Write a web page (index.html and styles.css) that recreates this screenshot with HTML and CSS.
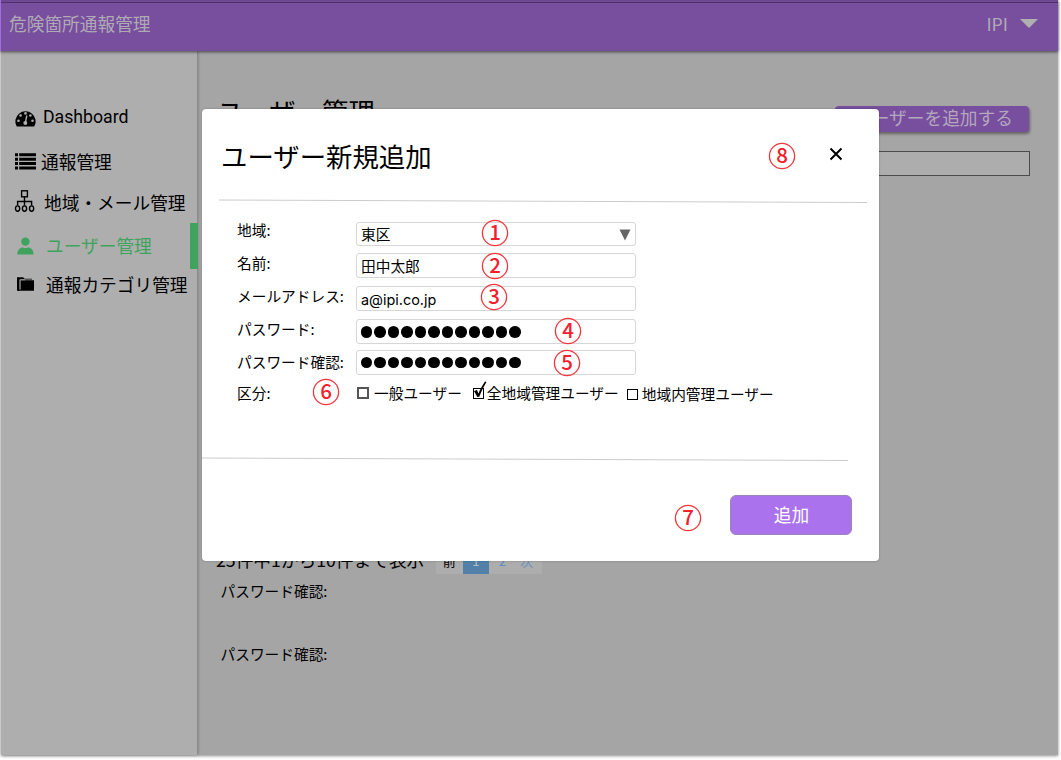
FILE: index.html
```html
<!DOCTYPE html>
<html lang="ja">
<head>
<meta charset="utf-8">
<title>危険箇所通報管理</title>
<link rel="stylesheet" href="styles.css">
</head>
<body>
<div class="app">
  <header class="topbar">
    <span class="brand">危険箇所通報管理</span>
    <span class="account">IPI <svg class="caret" width="18" height="9" viewBox="0 0 18 9"><path d="M0 0H18L9 9Z"/></svg></span>
  </header>
  <div class="body">
    <nav class="sidebar">
      <a class="item dash"><svg class="icon" width="21" height="17" viewBox="0 0 21 17"><path fill="currentColor" d="M1.7 16.6A10.2 10.2 0 1 1 19.3 16.6Z"/><g fill="#aeaeae"><circle cx="10.5" cy="3.4" r="1.3"/><circle cx="5.6" cy="5.5" r="1.3"/><circle cx="15.4" cy="5.5" r="1.3"/><circle cx="3.5" cy="10.8" r="1.3"/><circle cx="17.5" cy="10.8" r="1.3"/></g><path d="M11.8 5.5L10.4 12.5" stroke="#aeaeae" stroke-width="1.4"/><circle cx="10.3" cy="13" r="2" fill="#aeaeae"/></svg><span>Dashboard</span></a>
      <a class="item list"><svg class="icon" width="21" height="17" viewBox="0 0 21 17"><path fill="currentColor" d="M0 .3h3v3H0zM4.2 .3H21v3H4.2zM0 4.7h3v3H0zM4.2 4.7H21v3H4.2zM0 9.1h3v3H0zM4.2 9.1H21v3H4.2zM0 13.5h3v3H0zM4.2 13.5H21v3H4.2z"/></svg><span>通報管理</span></a>
      <a class="item area"><svg class="icon" width="20" height="23" viewBox="0 0 20 23" fill="none" stroke="currentColor" stroke-width="1.4"><rect x="6.6" y=".8" width="5.8" height="6"/><path d="M9.5 6.8V15.6M2.6 15.6V11.5H16.6V15.6" stroke-width="1.4"/><ellipse cx="2.6" cy="18.6" rx="2.1" ry="2.7"/><ellipse cx="9.5" cy="18.6" rx="2.1" ry="2.7"/><ellipse cx="16.6" cy="18.6" rx="2.1" ry="2.7"/></svg><span>地域・メール管理</span></a>
      <a class="item user active"><svg class="icon" width="17" height="18" viewBox="0 0 17 18" fill="currentColor"><circle cx="8.4" cy="4.6" r="4.2"/><path d="M.3 17.5C.3 12.8 3 10.4 6 10.4C7.5 11.2 9.3 11.2 10.8 10.4C14 10.4 16.6 12.8 16.6 17.5Z"/></svg><span>ユーザー管理</span></a>
      <a class="item cat"><svg class="icon" width="17" height="14" viewBox="0 0 17 14" fill="currentColor"><path d="M0 .3H6.2L7.6 1.8H15V2.6H3.2V12H2.4V13.7H0Z"/><path d="M3.6 3.3H17V13.7H1V12.5H3.6Z"/><path d="M2.8 12V2.8H8" fill="none" stroke="#aeaeae" stroke-width=".8"/></svg><span>通報カテゴリ管理</span></a>
    </nav>
    <main class="main">
      <div class="heading"><h1>ユーザー管理</h1><button class="add">ユーザーを追加する</button></div>
      <div class="search"></div>
      <div class="pagerow"><span class="count">25件中1から10件まで表示</span><div class="pager"><span>前</span><span class="current">1</span><span class="link">2</span><span class="link">次</span></div></div>
      <p class="note first">パスワード確認:</p>
      <p class="note">パスワード確認:</p>
    </main>
  </div>
</div>

<section class="dialog">
  <div class="dialog-head">
    <h2>ユーザー新規追加</h2>
    <svg class="num" width="28" height="28" viewBox="0 0 28 28"><circle cx="14" cy="14" r="12.6"/><text x="14" y="21.3">8</text></svg>
    <svg class="close" width="14" height="14" viewBox="0 0 14 14"><path d="M1.5 1.5L12.5 12.5M12.5 1.5L1.5 12.5"/></svg>
  </div>
  <svg class="rule top" width="648" height="5"><path d="M0 1L648 3.5"/></svg>
  <form class="form">
    <label>地域:</label>
    <div class="field f1">東区<svg class="drop" width="12" height="12" viewBox="0 0 12 12"><path d="M.5 .5H11.5L6 11.5Z"/></svg></div>
    <label>名前:</label>
    <div class="field">田中太郎</div>
    <label>メールアドレス:</label>
    <div class="field mail">a@ipi.co.jp</div>
    <label>パスワード:</label>
    <div class="field secret"><i></i><i></i><i></i><i></i><i></i><i></i><i></i><i></i><i></i><i></i><i></i><i></i></div>
    <label class="confirm">パスワード確認:</label>
    <div class="field"><i></i><i></i><i></i><i></i><i></i><i></i><i></i><i></i><i></i><i></i><i></i><i></i></div>
    <label>区分:</label>
    <div class="options">
      <span class="opt general"><b class="box soft"></b>一般ユーザー</span>
      <span class="opt all"><b class="box"></b>全地域管理ユーザー<svg class="tick" width="14" height="18" viewBox="0 0 14 18"><path d="M1 10L4 9L5.4 12.4C7.5 7.5 9.5 4 12 .5L13.5 1C10.5 6 8.2 10.5 6.3 15.8L4.3 16Z"/></svg></span>
      <span class="opt inner"><b class="box"></b>地域内管理ユーザー</span>
    </div>
  </form>
  <svg class="rule bottom" width="646" height="5"><path d="M0 1L646 3.5"/></svg>
  <div class="actions">
    <svg class="num" width="28" height="28" viewBox="0 0 28 28"><circle cx="14" cy="14" r="12.6"/><text x="14" y="21.3">7</text></svg>
    <button class="submit">追加</button>
  </div>
  <svg class="num pin p1" width="28" height="28" viewBox="0 0 28 28"><circle cx="14" cy="14" r="12.6"/><text x="14" y="21.3">1</text></svg>
  <svg class="num pin p2" width="28" height="28" viewBox="0 0 28 28"><circle cx="14" cy="14" r="12.6"/><text x="14" y="21.3">2</text></svg>
  <svg class="num pin p3" width="28" height="28" viewBox="0 0 28 28"><circle cx="14" cy="14" r="12.6"/><text x="14" y="21.3">3</text></svg>
  <svg class="num pin p4" width="28" height="28" viewBox="0 0 28 28"><circle cx="14" cy="14" r="12.6"/><text x="14" y="21.3">4</text></svg>
  <svg class="num pin p5" width="28" height="28" viewBox="0 0 28 28"><circle cx="14" cy="14" r="12.6"/><text x="14" y="21.3">5</text></svg>
  <svg class="num pin p6" width="28" height="28" viewBox="0 0 28 28"><circle cx="14" cy="14" r="12.6"/><text x="14" y="21.3">6</text></svg>
</section>
</body>
</html>
```
FILE: styles.css
```css
* { box-sizing: border-box; }
body { margin: 0; width: 1061px; height: 760px; overflow: hidden; position: relative; background: #fff; color: #000; font-family: "Noto Sans CJK JP", sans-serif; font-weight: 400; }
h1, h2, p { margin: 0; font-weight: 400; }
button { font: inherit; border: 0; padding: 0; }
svg { display: block; flex: none; overflow: visible; }
.app { margin-left: 1px; width: 1057px; height: 755px; display: flex; flex-direction: column; background: #a5a5a5; box-shadow: 0 1px 3px rgba(0,0,0,.45); }
.topbar { height: 51px; flex: none; margin-left: -1px; width: 1058px; background: #784e9f; border-left: 1px solid #a36be0; box-shadow: inset 0 2px 0 #6f4894, inset 0 3px 0 #4d3268, 0 1px 3px rgba(0,0,0,.6); display: flex; justify-content: space-between; align-items: center; padding: 0 20px 5px 8px; font-size: 17.7px; line-height: 26px; color: #b0aab5; position: relative; z-index: 1; }
.account { display: flex; align-items: center; gap: 12px; }
.caret { fill: #b0b0b0; }
.body { flex: 1; display: flex; min-height: 0; }
.sidebar { width: 196px; flex: none; background: #aeaeae; box-shadow: 1px 0 3px rgba(0,0,0,.25); padding: 52px 0 0 14px; }
.item { display: flex; align-items: center; font-size: 17.7px; line-height: 26px; height: 26px; white-space: nowrap; }
.dash { font-family: Roboto, sans-serif; gap: 7px; }
.dash .icon { margin-top: 5px; }
.dash span { margin-top: 1px; }
.list { margin-top: 19px; gap: 5px; }
.list .icon { margin-top: 1px; }
.area { margin-top: 15px; gap: 9px; }
.area .icon { margin-top: -2px; }
.user { margin-top: 8px; height: 46px; padding-left: 2px; gap: 12px; }
.user .icon { margin-top: -1px; }
.user span { margin-top: -3px; }
.cat { margin-top: 2px; padding-left: 2px; gap: 12px; }
.active { color: #3fa35d; border-right: 8px solid #3fa35d; margin-right: -1px; }
.main { flex: 1; padding: 43px 28px 0 19px; }
.heading { display: flex; justify-content: space-between; align-items: flex-start; height: 52px; }
.heading h1 { font-size: 26.4px; line-height: 34px; margin-left: 1px; }
.add { margin-top: 12px; margin-right: 1px; width: 194px; height: 26px; border-radius: 4px; background: #784e9f; color: #b3a8bd; box-shadow: 1px 2px 3px rgba(0,0,0,.4); font-size: 17.7px; line-height: 22px; padding: 0 0 4px 3px; }
.search { height: 25px; margin-left: 600px; margin-top: 5px; background: #adadad; border: 1px solid #4c4c4c; }
.pagerow { margin-top: 372px; height: 26px; display: flex; align-items: flex-end; gap: 12px; font-size: 17.7px; line-height: 30px; }
.count { white-space: nowrap; width: 208px; }
.pager { display: flex; height: 26px; background: #adadad; font-size: 13px; line-height: 25px; text-align: center; }
.pager span { width: 26.5px; }
.pager .current { background: #5280a8; color: #b4bcc4; }
.pager .link { color: #5d8fc0; }
.pager .link:last-child { padding-right: 4px; }
.note { margin-left: 4.5px; margin-top: 41px; font-size: 14.7px; line-height: 22px; }
.note.first { margin-top: 6px; }
.dialog { position: absolute; left: 202px; top: 109px; width: 677px; height: 452px; background: #fff; border-radius: 4px; box-shadow: 0 0 2px rgba(0,0,0,.35); }
.dialog-head { height: 90px; display: flex; align-items: center; padding: 5px 36.5px 0 19px; }
.dialog-head h2 { font-size: 26.4px; line-height: 36px; flex: 1; white-space: nowrap; margin-top: -1px; }
.dialog-head .num { margin-right: 33px; margin-top: -1px; }
.close { stroke: #000; stroke-width: 2; margin-top: -5px; }
.rule { stroke: #ccc; stroke-width: 1; fill: none; }
.rule.top { margin-left: 17px; }
.form { display: grid; grid-template-columns: 118px 281px; grid-template-rows: 33px 33px 33px 31px 33px 30px; padding: 15px 0 0 35px; height: 253px; align-content: start; font-size: 14.7px; line-height: 22px; white-space: nowrap; }
.field { height: 25px; margin-top: 1px; margin-left: .5px; border: 1px solid #d6d6d6; border-radius: 3px; padding-left: 4.5px; line-height: 22px; display: flex; align-items: center; }
.f1 { height: 24px; margin-top: 3px; line-height: 20px; padding-bottom: 1px; }
.mail { font-family: Inter, sans-serif; padding-top: 2px; font-size: 14.4px; }
.confirm { margin-top: 2px; }
.secret { padding-top: 1px; }
.drop { fill: #666; margin: 2px 4px 0 auto; }
.field i { width: 11.4px; height: 11.4px; margin-right: 2.1px; border-radius: 50%; background: #000; }
.options { display: flex; }
.opt { display: flex; align-items: center; position: relative; height: 22px; }
.general { margin-left: 2px; }
.all { margin-left: 11px; }
.inner { margin-left: 8px; margin-top: 1px; }
.box { width: 11px; height: 11px; border: 1.5px solid #000; margin-right: 4px; }
.soft { width: 12px; height: 12px; border: 2px solid #555; margin-right: 5px; }
.all .box { width: 11px; margin-right: 3px; }
.tick { position: absolute; left: 0; top: -1px; }
.actions { display: flex; align-items: flex-start; justify-content: flex-end; gap: 28px; padding: 32.5px 27px 0 0; }
.actions .num { margin-top: 9px; }
.submit { width: 122px; height: 40px; border-radius: 6px; background: #aa72ec; border: 1px solid #9a86b4; color: #fff; font-size: 17.7px; line-height: 36px; padding: 0 0 1px 1px; }
.num { fill: none; stroke: #f5343c; stroke-width: 1.3; }
.num text { fill: #f3202c; stroke: none; font: 500 20.5px "Noto Sans CJK JP", sans-serif; text-anchor: middle; }
.pin { position: absolute; }
.p1 { left: 279.4px; top: 110px; }
.p2 { left: 279.4px; top: 143px; }
.p3 { left: 278.4px; top: 174px; }
.p4 { left: 352px; top: 208px; }
.p5 { left: 351px; top: 240px; }
.p6 { left: 110px; top: 269px; }
```
